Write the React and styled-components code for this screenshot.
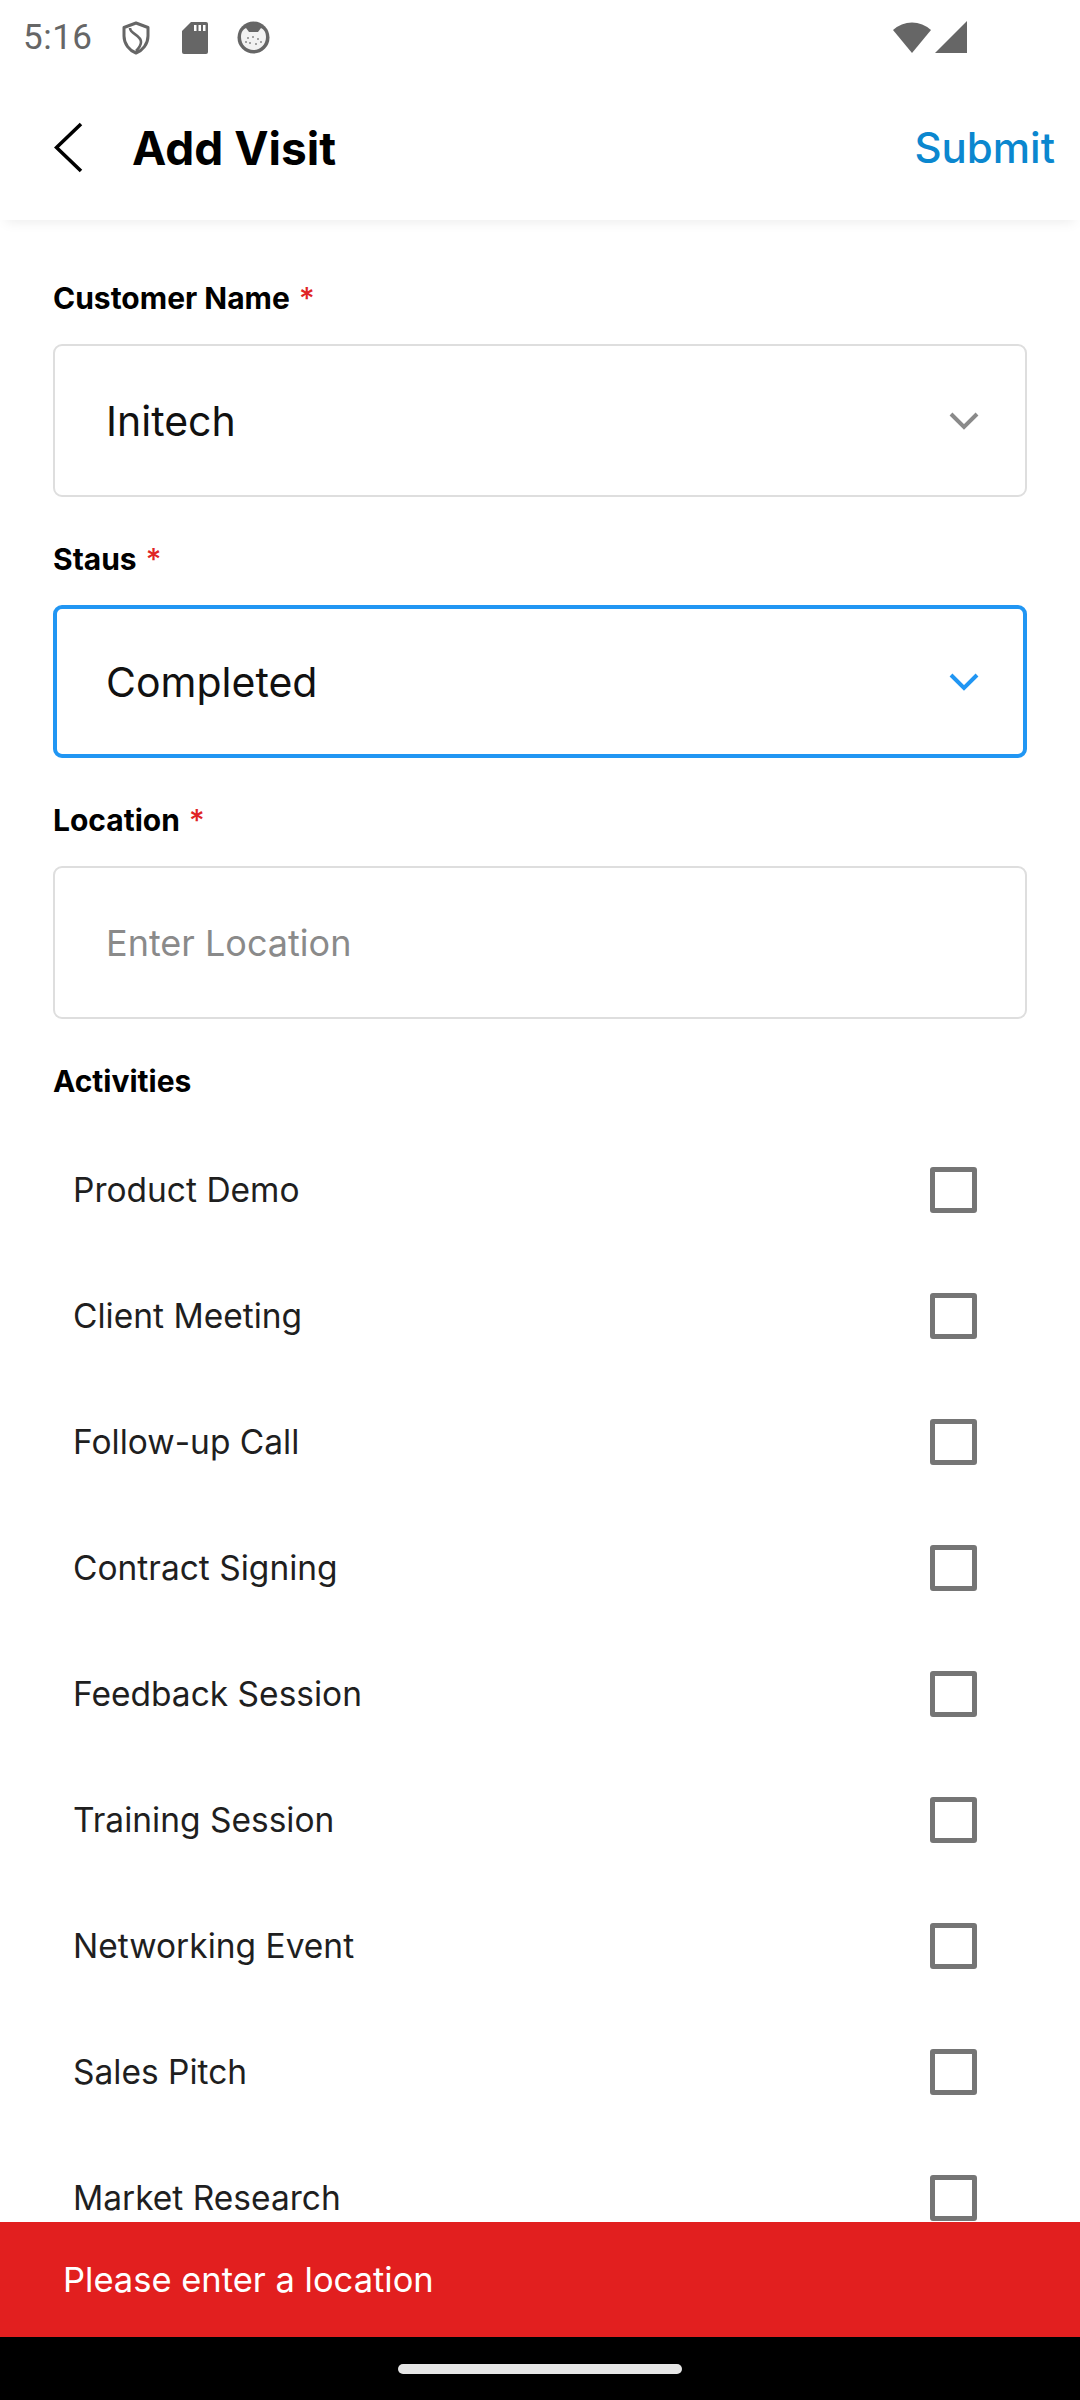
import React from "react";
import styled, { createGlobalStyle } from "styled-components";

const GlobalStyle = createGlobalStyle`
  html, body {
    margin: 0;
    padding: 0;
    background: #fff;
  }
  body {
    font-family: "Inter", "Liberation Sans", sans-serif;
  }
  * {
    box-sizing: border-box;
  }
`;

const activities = [
  "Product Demo",
  "Client Meeting",
  "Follow-up Call",
  "Contract Signing",
  "Feedback Session",
  "Training Session",
  "Networking Event",
  "Sales Pitch",
  "Market Research",
];

export default function App() {
  return (
    <Screen>
      <GlobalStyle />
      <StatusBar>
        <StatusLeft>
          <Clock>5:16</Clock>
          <ShieldIcon />
          <SdIcon />
          <FaceIcon />
        </StatusLeft>
        <StatusRight>
          <WifiIcon />
          <SignalIcon />
        </StatusRight>
      </StatusBar>

      <Header>
        <BackButton aria-label="Back">
          <svg width="29" height="51" viewBox="0 0 29 51">
            <polyline
              points="27,2 2.5,25.5 27,49"
              fill="none"
              stroke="#000"
              strokeWidth="3.6"
            />
          </svg>
        </BackButton>
        <Title>Add Visit</Title>
        <SubmitButton>Submit</SubmitButton>
      </Header>

      <Body>
        <Form>
          <Field>
            <Label>
              Customer Name <Required>*</Required>
            </Label>
            <SelectBox>
              <SelectValue>Initech</SelectValue>
              <Chevron color="#8a8a8a" />
            </SelectBox>
          </Field>

          <Field>
            <Label>
              Staus <Required>*</Required>
            </Label>
            <SelectBox $focused>
              <SelectValue>Completed</SelectValue>
              <Chevron color="#2196f3" />
            </SelectBox>
          </Field>

          <Field>
            <Label>
              Location <Required>*</Required>
            </Label>
            <TextInput placeholder="Enter Location" />
          </Field>

          <Label>Activities</Label>
          <ActivityList>
            {activities.map((name) => (
              <ActivityRow key={name}>
                <ActivityName>{name}</ActivityName>
                <CheckBox />
              </ActivityRow>
            ))}
          </ActivityList>
        </Form>

        <Toast>Please enter a location</Toast>
      </Body>

      <NavBar>
        <HomePill />
      </NavBar>
    </Screen>
  );
}

function Chevron({ color }) {
  return (
    <svg width="30" height="18" viewBox="0 0 30 18">
      <polyline
        points="2,2 15,15 28,2"
        fill="none"
        stroke={color}
        strokeWidth="4"
      />
    </svg>
  );
}

function ShieldIcon() {
  return (
    <svg width="30" height="34" viewBox="0 0 30 34">
      <path
        d="M15 2 L27 6.5 V15 C27 23 21.5 29.5 15 32 C8.5 29.5 3 23 3 15 V6.5 Z"
        fill="none"
        stroke="#666"
        strokeWidth="3"
        strokeLinejoin="round"
      />
      <path
        d="M9 7 C9 13 20 14 20 21 C20 25 17 28 15 30"
        fill="none"
        stroke="#666"
        strokeWidth="2.6"
      />
    </svg>
  );
}

function SdIcon() {
  return (
    <svg width="26" height="32" viewBox="0 0 26 32">
      <path
        d="M9 0 H24 A2 2 0 0 1 26 2 V30 A2 2 0 0 1 24 32 H2 A2 2 0 0 1 0 30 V9 Z"
        fill="#666"
      />
      <rect x="12" y="3" width="2.5" height="6" fill="#fff" />
      <rect x="16.5" y="3" width="2.5" height="6" fill="#fff" />
      <rect x="21" y="3" width="2.5" height="6" fill="#fff" />
    </svg>
  );
}

function FaceIcon() {
  return (
    <svg width="33" height="33" viewBox="0 0 33 33">
      <circle cx="16.5" cy="16.5" r="16" fill="#666" />
      <path
        d="M4 16 C4 10 7 8 9 7 L12 11 H21 L24 7 C26 8 29 10 29 16 C29 24 23 29 16.5 29 C10 29 4 24 4 16 Z"
        fill="#f2f2f2"
      />
      <circle cx="11" cy="17" r="1" fill="#888" />
      <circle cx="16" cy="16" r="1" fill="#888" />
      <circle cx="21" cy="18" r="1" fill="#888" />
      <circle cx="13" cy="22" r="1" fill="#888" />
      <circle cx="19" cy="23" r="1" fill="#888" />
      <circle cx="24" cy="21" r="1" fill="#888" />
      <circle cx="9" cy="21" r="1" fill="#888" />
    </svg>
  );
}

function WifiIcon() {
  return (
    <svg width="40" height="33" viewBox="0 0 40 33">
      <path d="M20 32 L1 9 A28 28 0 0 1 39 9 Z" fill="#666" />
    </svg>
  );
}

function SignalIcon() {
  return (
    <svg width="32" height="33" viewBox="0 0 32 33">
      <path d="M0 32 L32 0 V32 Z" fill="#666" />
    </svg>
  );
}

const Screen = styled.div`
  width: 1080px;
  height: 2400px;
  display: flex;
  flex-direction: column;
  overflow: hidden;
  background: #fff;
`;

const StatusBar = styled.div`
  height: 75px;
  display: flex;
  align-items: center;
  justify-content: space-between;
  padding: 0 113px 0 23px;
  flex-shrink: 0;
  background: #fff;
  position: relative;
  z-index: 3;
`;

const StatusLeft = styled.div`
  display: flex;
  align-items: center;

  svg:nth-of-type(1) {
    margin-left: 28px;
  }
  svg:nth-of-type(2) {
    margin-left: 31px;
  }
  svg:nth-of-type(3) {
    margin-left: 29px;
  }
`;

const StatusRight = styled.div`
  display: flex;
  align-items: center;
  gap: 3px;
`;

const Clock = styled.span`
  font-family: "Roboto", sans-serif;
  font-size: 35px;
  color: #666;
  letter-spacing: 0.5px;
`;

const Header = styled.header`
  height: 145px;
  display: flex;
  align-items: center;
  padding: 0 25px 0 54px;
  background: #fff;
  box-shadow: 0 8px 12px -6px rgba(0, 0, 0, 0.08);
  position: relative;
  z-index: 2;
  flex-shrink: 0;
`;

const BackButton = styled.button`
  border: none;
  background: none;
  padding: 0;
  display: flex;
  align-items: center;
`;

const Title = styled.h1`
  margin: 0 0 0 49px;
  font-size: 46px;
  font-weight: 700;
  color: #000;
  flex: 1;
`;

const SubmitButton = styled.button`
  border: none;
  background: none;
  padding: 0;
  font-family: "Inter", "Liberation Sans", sans-serif;
  font-size: 42px;
  font-weight: 500;
  color: #0b87cf;
`;

const Body = styled.main`
  flex: 1;
  position: relative;
  overflow: hidden;
`;

const Form = styled.div`
  padding: 60px 53px 0;
`;

const Field = styled.div`
  margin-bottom: 44px;
`;

const Label = styled.div`
  font-size: 30px;
  line-height: 36px;
  font-weight: 700;
  color: #000;
  margin-bottom: 28px;
`;

const Required = styled.span`
  color: #e02424;
  font-weight: 500;
  margin-left: 2px;
`;

const SelectBox = styled.div`
  height: 153px;
  border: ${(p) => (p.$focused ? "4px solid #2196f3" : "2px solid #dedede")};
  border-radius: 9px;
  display: flex;
  align-items: center;
  justify-content: space-between;
  padding: 0 ${(p) => (p.$focused ? 44 : 46)}px 0
    ${(p) => (p.$focused ? 49 : 51)}px;
`;

const SelectValue = styled.span`
  font-size: 41px;
  color: #111;
`;

const TextInput = styled.input`
  display: block;
  width: 100%;
  height: 153px;
  border: 2px solid #dedede;
  border-radius: 9px;
  padding: 0 51px;
  font-family: "Inter", "Liberation Sans", sans-serif;
  font-size: 36px;
  color: #111;
  outline: none;

  &::placeholder {
    color: #8a8a8a;
  }
`;

const ActivityList = styled.div`
  display: flex;
  flex-direction: column;
`;

const ActivityRow = styled.div`
  height: 126px;
  display: flex;
  align-items: center;
  justify-content: space-between;
  padding: 0 50px 0 20px;
`;

const ActivityName = styled.span`
  font-size: 33.5px;
  color: #1f1f1f;
`;

const CheckBox = styled.span`
  width: 47px;
  height: 46px;
  border: 5px solid #757575;
  border-radius: 3px;
`;

const Toast = styled.div`
  position: absolute;
  left: 0;
  right: 0;
  bottom: 0;
  height: 115px;
  background: #e21f1f;
  color: #fff;
  font-size: 34.5px;
  display: flex;
  align-items: center;
  padding-left: 63px;
`;

const NavBar = styled.div`
  height: 63px;
  background: #000;
  display: flex;
  justify-content: center;
  align-items: center;
  flex-shrink: 0;
`;

const HomePill = styled.div`
  width: 284px;
  height: 10px;
  border-radius: 5px;
  background: #e6e6e6;
`;
